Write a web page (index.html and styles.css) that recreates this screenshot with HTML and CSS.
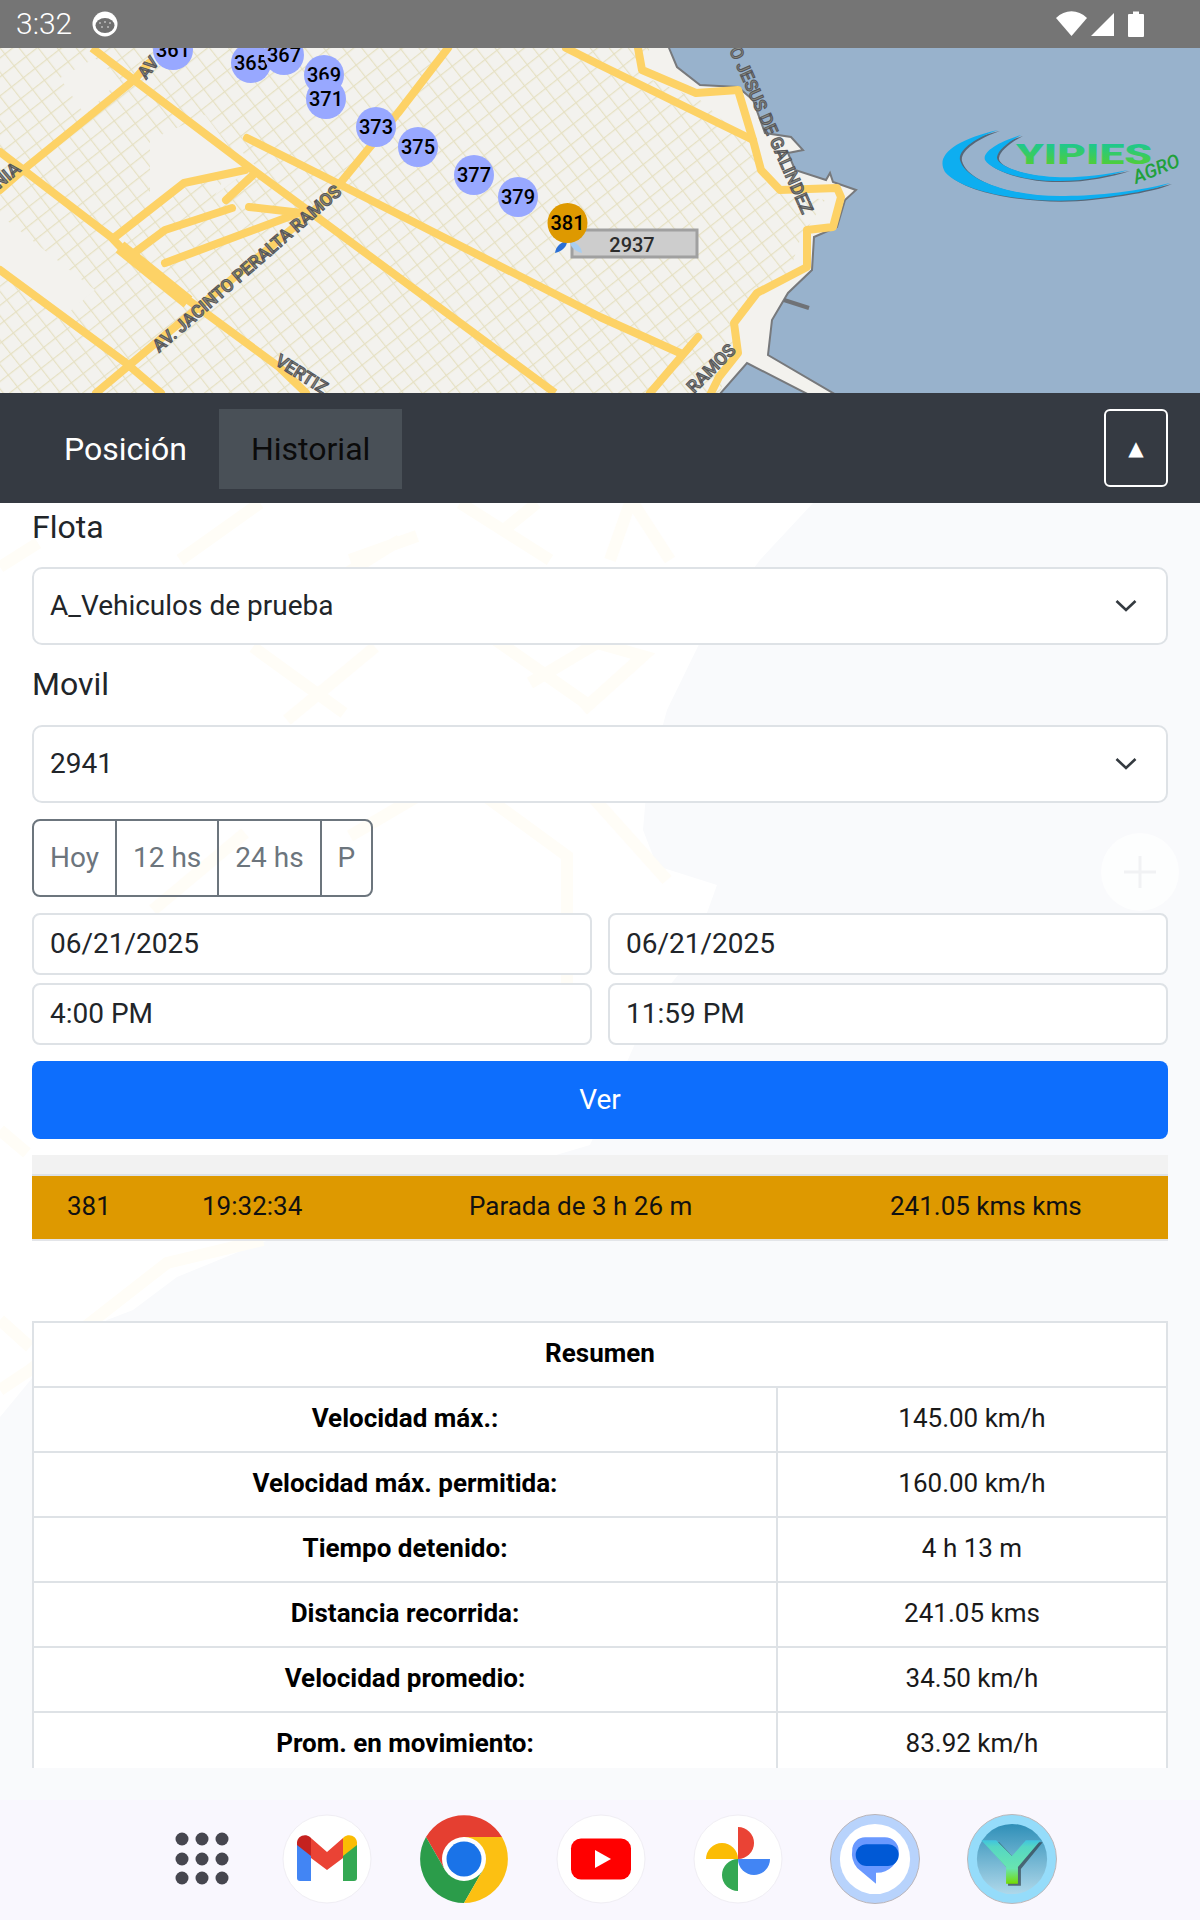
FILE: index.html
```html
<!DOCTYPE html>
<html lang="es">
<head>
<meta charset="utf-8">
<title>Yipies Agro</title>
<link rel="stylesheet" href="styles.css">
</head>
<body>
<div class="screen">
  <header class="status">
    <span class="status-time">3:32</span>
    <svg class="status-face" viewBox="0 0 26 26"><circle cx="13" cy="13" r="12.5" fill="#fff"/><ellipse cx="13" cy="14.5" rx="9.5" ry="7.5" fill="#6f6f6f"/><g fill="#bbb"><circle cx="8" cy="12" r="1"/><circle cx="13" cy="11" r="1"/><circle cx="18" cy="12" r="1"/><circle cx="10" cy="16" r="1"/><circle cx="16" cy="16" r="1"/></g></svg>
    <span class="status-gap"></span>
    <svg class="status-icons" viewBox="0 0 90 28"><path d="M0 8 C9 -1 22 -1 31 8 L15.500 26 Z" fill="#fff"/><path d="M35 26 L58 3 V26 Z" fill="#fff"/><path d="M73 4 H77 V1.500 H83 V4 H87 A1 1 0 0 1 88 5 V26 A1 1 0 0 1 87 27 H73 A1 1 0 0 1 72 26 V5 A1 1 0 0 1 73 4 Z" fill="#fff"/></svg>
  </header>

  <section class="map">
    <svg class="map-svg" viewBox="0 48 1200 345" preserveAspectRatio="none">
      <defs>
        <pattern id="streets" width="15" height="15" patternUnits="userSpaceOnUse" patternTransform="rotate(-38)">
          <path d="M0 0 H15 M0 0 V15" stroke="#e6e1c4" stroke-width="2.400" fill="none"/>
        </pattern>
        <linearGradient id="logoText" x1="0" y1="0" x2="0" y2="1">
          <stop offset="0" stop-color="#0fc6a8"/><stop offset="1" stop-color="#5fd01e"/>
        </linearGradient>
        <filter id="soft"><feGaussianBlur stdDeviation="0.700"/></filter>
      </defs>
      <rect x="0" y="48" width="1200" height="345" fill="#98b2cc"/>
      <path d="M-10 38 H665 L669 48 L677 67 L700 85 L738 87 L753 100 L765 133 L791 137 L803 150 L788 153 L795 170 L826 180 L830 173 L833 182 L856 190 L845 200 L837 227 L814 237 L812 270 L788 293 L772 320 L768 355 L850 403 H825 L747 363 L712 403 H-10 Z" fill="#f3f2ee" stroke="#77797c" stroke-width="2" filter="url(#soft)"/>
      <path d="M784 300 L809 308" stroke="#6f7276" stroke-width="4"/>
      <path d="M0 48 H650 L640 75 L700 100 L745 140 L770 190 L825 200 L800 240 L790 270 L745 310 L720 393 H0 Z" fill="url(#streets)"/>
      <g fill="#f3f2ee">
        <path d="M205 115 L245 168 L190 182 L150 205 L150 140 Z"/>
        <path d="M0 215 L95 290 L60 320 L0 265 Z"/>
        <path d="M60 78 L95 58 L120 80 L85 115 Z"/>
        <path d="M255 165 L215 195 L240 150 Z"/>
      </g>
      <g fill="none" stroke="#fdd266" stroke-width="8" stroke-linecap="round" stroke-linejoin="round">
        <path d="M92 48 L134 80 L253 170 L325 223 L555 393" stroke-linecap="butt"/>
        <path d="M149 63 L134 80 L23 170 L0 190"/>
        <path d="M448 48 L398 113 L337 187 L318 207 L96 393"/>
        <path d="M247 138 L337 183 L600 317 L680 353"/>
        <path d="M698 337 L650 393"/>
        <path d="M566 48 L600 65 L753 140"/>
        <path d="M638 48 L642 70 L696 93 L738 90 L753 140 L761 170 L780 190 L837 188 L841 197 L833 227 L807 230 L807 267 L757 293 L734 323 L738 353 L719 377 L711 393"/>
        <path d="M0 152 L111 237 L130 257 L188 300 L279 367 L306 393"/>
        <path d="M0 270 L126 363 L161 393"/>
        <path d="M115 237 L184 183 L245 170"/>
        <path d="M226 200 L253 175"/>
        <path d="M134 253 L165 230 L232 208"/>
        <path d="M165 263 L299 213"/>
        <path d="M249 207 L302 213"/>
        <path d="M120 247 L188 302" stroke-width="14" stroke-linecap="butt"/>
      </g>
      <g class="road-label">
        <text transform="translate(159 353) rotate(-41)">AV. JACINTO PERALTA RAMOS</text>
        <text transform="translate(274 364) rotate(32)">VERTIZ</text>
        <text transform="translate(-10 197) rotate(-40)">ONIA</text>
        <text transform="translate(146 80) rotate(-52)">AV</text>
        <text transform="translate(729 50) rotate(66)">O JESUS DE GALINDEZ</text>
        <text transform="translate(694 394) rotate(-45)">RAMOS</text>
      </g>
      <g>
        <path d="M572 230 H697 V257 H572 Z" fill="#cdcdcd" stroke="#a0a0a0" stroke-width="3"/>
        <path d="M555 253 C556 246 561 242 567 241 C567 247 562 251 555 253 Z" fill="#2a6fd6"/>
        <path d="M582 253 C581 246 576 242 570 241 C570 247 575 251 582 253 Z" fill="#a8cdf0"/>
        <text class="car-label" x="632" y="252" text-anchor="middle">2937</text>
      </g>
      <g class="pins">
        <g><circle cx="173" cy="50" r="20"/><text x="173" y="57">361</text></g>
        <g><circle cx="251" cy="63" r="20"/><text x="251" y="70">365</text></g>
        <g><circle cx="284" cy="55" r="20"/><text x="284" y="62">367</text></g>
        <g><circle cx="324" cy="75" r="20"/><text x="324" y="82">369</text></g>
        <g><circle cx="326" cy="99" r="20"/><text x="326" y="106">371</text></g>
        <g><circle cx="376" cy="127" r="20"/><text x="376" y="134">373</text></g>
        <g><circle cx="418" cy="147" r="20"/><text x="418" y="154">375</text></g>
        <g><circle cx="474" cy="175" r="20"/><text x="474" y="182">377</text></g>
        <g><circle cx="518" cy="197" r="20"/><text x="518" y="204">379</text></g>
        <g class="pin-last"><circle cx="567.500" cy="223" r="20"/><text x="567.500" y="230">381</text></g>
      </g>
      <g>
        <path d="M1000 131 C957 141 937 156 947 173 C967 196 1042 206 1092 200 C1127 196 1157 191 1172 184 C1132 194 1092 197 1062 197 C1012 197 967 181 962 161 C960 151 977 139 1000 131 Z" fill="#2a3540" fill-opacity="0.600"/>
        <path d="M998 130 C955 140 935 155 945 172 C965 195 1040 205 1090 199 C1125 195 1155 190 1170 183 C1130 193 1090 196 1060 196 C1010 196 965 180 960 160 C958 150 975 138 998 130 Z" fill="#0daef0"/>
        <path d="M1023 136 C1000 143 984 153 987 161 C994 173 1032 183 1062 182 C1087 182 1112 177 1130 171 C1102 177 1077 179 1057 178 C1022 176 998 166 999 158 C1000 151 1010 143 1023 136 Z" fill="#2a3540" fill-opacity="0.600"/>
        <path d="M1021 135 C998 142 982 152 985 160 C992 172 1030 182 1060 181 C1085 181 1110 176 1128 170 C1100 176 1075 178 1055 177 C1020 175 996 165 997 157 C998 150 1008 142 1021 135 Z" fill="#0daef0"/>
        <text class="logo-name" x="1016" y="164" textLength="136" lengthAdjust="spacingAndGlyphs" fill="url(#logoText)">YIPIES</text>
        <text class="logo-agro" transform="translate(1136 184) rotate(-22)">AGRO</text>
      </g>
    </svg>
  </section>

  <nav class="nav">
    <a class="nav-link">Posición</a>
    <a class="nav-link nav-active">Historial</a>
    <button class="toggler" type="button">▲</button>
  </nav>

  <main class="panel">
    <svg class="ghost" viewBox="0 503 1200 1297" preserveAspectRatio="none">
      <path d="M0 503 H813 L760 560 L703 636 L667 710 L647 783 L643 830 L657 866 L717 885 L690 960 L650 1010 L590 1145 L263 1242 L177 1277 L133 1310 L107 1320 L33 1377 L0 1417 Z" fill="#fff"/>
      <g fill="none" stroke="#fffdf7" stroke-width="12">
        <path d="M490 636 L590 706"/><path d="M530 683 L597 643 L643 656 L583 710"/>
        <path d="M467 783 L567 856 L567 1040"/><path d="M580 783 L667 880"/><path d="M350 836 L440 783"/>
        <path d="M500 533 L537 503"/><path d="M460 503 L550 560"/><path d="M610 560 L630 503"/><path d="M633 503 L670 560"/><path d="M350 560 L417 536"/>
        <path d="M0 1320 L30 1347"/><path d="M0 1390 L30 1370 L167 1263 L263 1240"/><path d="M0 1130 L27 1153"/>
        <path d="M253 647 L344 713"/><path d="M287 720 L375 647"/><path d="M0 567 L38 543"/><path d="M153 910 L245 833"/>
        <path d="M180 560 L260 503"/><path d="M320 590 L400 540"/>
      </g>
    </svg>
    <svg class="ghost-plus" viewBox="0 0 78 78"><circle cx="39" cy="39" r="39" fill="#fff" fill-opacity="0.7"/><path d="M39 23 V55 M23 39 H55" stroke="#f1f2f4" stroke-width="3"/></svg>

    <div class="form">
      <label class="field-label field-first">Flota</label>
      <div class="select">A_Vehiculos de prueba<svg class="chevron" viewBox="0 0 22 14"><path d="M1.500 2 L11 11 L20.500 2" fill="none" stroke="#343a40" stroke-width="2.600"/></svg></div>
      <label class="field-label">Movil</label>
      <div class="select">2941<svg class="chevron" viewBox="0 0 22 14"><path d="M1.500 2 L11 11 L20.500 2" fill="none" stroke="#343a40" stroke-width="2.600"/></svg></div>
      <div class="btn-group">
        <span class="btn-item">Hoy</span>
        <span class="btn-item">12 hs</span>
        <span class="btn-item">24 hs</span>
        <span class="btn-item">P</span>
      </div>
      <div class="inputs">
        <div class="input">06/21/2025</div>
        <div class="input">06/21/2025</div>
        <div class="input">4:00 PM</div>
        <div class="input">11:59 PM</div>
      </div>
      <button class="primary" type="button">Ver</button>
      <div class="stripe"></div>
      <div class="event">
        <span>381</span>
        <span>19:32:34</span>
        <span>Parada de 3 h 26 m</span>
        <span>241.05 kms kms</span>
      </div>
      <div class="summary-clip">
        <table class="summary">
          <colgroup><col class="col-name"><col></colgroup>
          <tr class="summary-head"><th colspan="2">Resumen</th></tr>
          <tr><th>Velocidad máx.:</th><td>145.00 km/h</td></tr>
          <tr><th>Velocidad máx. permitida:</th><td>160.00 km/h</td></tr>
          <tr><th>Tiempo detenido:</th><td>4 h 13 m</td></tr>
          <tr><th>Distancia recorrida:</th><td>241.05 kms</td></tr>
          <tr><th>Velocidad promedio:</th><td>34.50 km/h</td></tr>
          <tr><th>Prom. en movimiento:</th><td>83.92 km/h</td></tr>
        </table>
      </div>
    </div>
  </main>

  <footer class="dock">
    <svg class="dock-apps" viewBox="0 0 60 60" fill="#46464f">
      <circle cx="10" cy="10" r="6.500"/><circle cx="30" cy="10" r="6.500"/><circle cx="50" cy="10" r="6.500"/>
      <circle cx="10" cy="30" r="6.500"/><circle cx="30" cy="30" r="6.500"/><circle cx="50" cy="30" r="6.500"/>
      <circle cx="10" cy="49" r="6.500"/><circle cx="30" cy="49" r="6.500"/><circle cx="50" cy="49" r="6.500"/>
    </svg>
    <svg class="dock-icon" viewBox="-45 -45 90 90">
      <circle r="44" fill="#fff" stroke="#f0eef4" stroke-width="1"/>
      <path d="M-30 -17 V19 A3 3 0 0 0 -27 22 H-16 V-8 Z" fill="#4285f4"/>
      <path d="M30 -17 V19 A3 3 0 0 1 27 22 H16 V-8 Z" fill="#34a853"/>
      <path d="M-30 -16 C-30 -23 -22 -26 -17 -22 L-16 -21 V-3 L-30 -14 Z" fill="#c5221f"/>
      <path d="M30 -16 C30 -23 22 -26 17 -22 L16 -21 V-3 L30 -14 Z" fill="#fbbc04"/>
      <path d="M-16 -21 L0 -7 L16 -21 V-1 L0 11 L-16 -1 Z" fill="#ea4335"/>
    </svg>
    <svg class="dock-icon" viewBox="-45 -45 90 90">
      <path d="M-38 -22 A44 44 0 0 1 38 -22 L0 -22 L-19 11 Z" fill="#e53f31"/>
      <path d="M-38 -22 L-19 11 L19 11 L0 44 A44 44 0 0 1 -38 -22 Z" fill="#2b9c4a"/>
      <path d="M38 -22 A44 44 0 0 1 0 44 L19 11 L0 -22 Z" fill="#fcc012"/>
      <circle r="22" fill="#fff"/><circle r="17.500" fill="#1a73e8"/>
    </svg>
    <svg class="dock-icon" viewBox="-45 -45 90 90">
      <circle r="44" fill="#fff" stroke="#f0eef4" stroke-width="1"/>
      <rect x="-30" y="-20.500" width="60" height="41" rx="10" fill="#f00"/>
      <path d="M-6 -9 L10 0 L-6 9 Z" fill="#fff"/>
    </svg>
    <svg class="dock-icon" viewBox="-45 -45 90 90">
      <circle r="44" fill="#fff" stroke="#f0eef4" stroke-width="1"/>
      <path d="M0 0 V-32 A16 16 0 0 1 0 0 Z" fill="#ea4335"/>
      <path d="M0 0 H-32 A16 16 0 0 1 0 0 Z" fill="#fbbc04"/>
      <path d="M0 0 V32 A16 16 0 0 1 0 0 Z" fill="#34a853"/>
      <path d="M0 0 H32 A16 16 0 0 1 0 0 Z" fill="#4285f4"/>
    </svg>
    <svg class="dock-icon" viewBox="-45.500 -45.500 91 91">
      <circle r="45" fill="#b8d3fc" stroke="#b9b4b8" stroke-width="1"/>
      <circle r="35.500" fill="#fff"/>
      <path d="M-10 -22 H10 A14 14 0 0 1 24 -8 A22 22 0 0 1 2 14 H1 V25 L-18 9 A22 22 0 0 1 -23 -9 A13 13 0 0 1 -10 -22 Z" fill="#6a99ff"/>
      <rect x="-19.500" y="-15" width="43.500" height="22" rx="11" fill="#0059d6"/>
    </svg>
    <svg class="dock-icon" viewBox="-45.500 -45.500 91 91">
      <defs>
        <linearGradient id="yBack" x1="0" y1="0" x2="0" y2="1"><stop offset="0" stop-color="#2f8fb8"/><stop offset="1" stop-color="#afd8ea"/></linearGradient>
        <linearGradient id="yMark" x1="0" y1="0" x2="0" y2="1"><stop offset="0" stop-color="#3fc3e0"/><stop offset="0.150" stop-color="#55d6c4"/><stop offset="0.650" stop-color="#69e5b0"/><stop offset="1" stop-color="#74dc00"/></linearGradient>
      </defs>
      <circle r="45" fill="#95dcfa" stroke="#bcb6b8" stroke-width="1"/>
      <circle r="35.500" fill="url(#yBack)"/>
      <path d="M-28 -17 H-13 L2 -1 L17 -17 H31 L9 10 V27 H-4 V10 Z" fill="#33424a" fill-opacity="0.700"/>
      <path d="M-31 -19 H-16 L0 -3 L14 -19 H29 L6 8 V25 H-6 V8 Z" fill="url(#yMark)"/>
    </svg>
  </footer>
</div>
</body>
</html>
```
FILE: styles.css
```css
* { box-sizing: border-box; }

html, body { margin: 0; padding: 0; }

body {
  width: 1200px;
  height: 1920px;
  overflow: hidden;
  font-family: Roboto, "Liberation Sans", sans-serif;
  color: #212529;
}

.screen {
  display: flex;
  flex-direction: column;
  width: 1200px;
  height: 1920px;
}

/* status bar */
.status {
  display: flex;
  align-items: center;
  flex: 0 0 48px;
  padding: 0 54px 0 16px;
  background: #757575;
  color: #fff;
}
.status-time { font-size: 30px; font-weight: 300; line-height: 48px; }
.status-face { width: 26px; height: 26px; margin-left: 20px; }
.status-gap { flex: 1; }
.status-icons { width: 90px; height: 28px; }

/* map */
.map { flex: 0 0 345px; overflow: hidden; }
.map-svg { display: block; width: 1200px; height: 345px; }

.road-label text {
  font-size: 17.500px;
  font-weight: 500;
  fill: #8a8a80;
  stroke: #55565a;
  stroke-width: 1px;
}
.car-label { font-size: 20px; font-weight: 500; fill: #2c2c2c; }
.pins circle { fill: #98a8ff; }
.pins text { font-size: 20px; font-weight: 500; fill: #000; text-anchor: middle; }
.pins .pin-last circle { fill: #de9900; }
.logo-name { font-size: 28px; font-weight: 900; }
.logo-agro { font-size: 19px; font-style: italic; font-weight: 500; fill: #21a13a; }

/* navbar */
.nav {
  display: flex;
  align-items: center;
  flex: 0 0 110px;
  padding: 0 32px;
  background: #353a42;
}
.nav-link {
  display: flex;
  align-items: center;
  height: 80px;
  margin-top: 2px;
  padding: 0 32px;
  font-size: 32px;
  color: #fff;
}
.nav-active { background: #495057; color: #0b0b0b; }
.toggler {
  width: 64px;
  height: 78px;
  margin-left: auto;
  padding: 0;
  border: 2px solid #fff;
  border-radius: 6px;
  background: transparent;
  color: #fff;
  font-family: "DejaVu Sans", sans-serif;
  font-size: 20px;
}

/* panel */
.panel {
  position: relative;
  flex: 1;
  overflow: hidden;
  background: #f9fafc;
  padding: 0 32px;
}
.ghost {
  position: absolute;
  left: 0;
  top: 0;
  width: 1200px;
  height: 1297px;
}
.ghost-plus {
  position: absolute;
  left: 1101px;
  top: 330px;
  width: 78px;
  height: 78px;
}
.form { position: relative; }

.field-label {
  display: block;
  height: 48px;
  margin: 16px 0;
  font-size: 32px;
  line-height: 47px;
}
.field-first { margin: 1px 0 15px; }

.select {
  display: flex;
  align-items: center;
  justify-content: space-between;
  height: 78px;
  padding: 0 20px 2px 16px;
  border: 2px solid #dee2e6;
  border-radius: 10px;
  background: #fff;
  font-size: 28px;
}
.chevron { width: 22px; height: 14px; margin-right: 9px; margin-top: 2px; }

.btn-group {
  display: inline-flex;
  height: 78px;
  margin-top: 16px;
  border: 2px solid #6c757d;
  border-radius: 8px;
  background: transparent;
  vertical-align: top;
}
.btn-item {
  display: flex;
  align-items: center;
  padding: 0 16px 2px;
  border-left: 2px solid #6c757d;
  font-size: 28px;
  color: #6c757d;
}
.btn-item:first-child { border-left: 0; }

.inputs {
  display: grid;
  grid-template-columns: 1fr 1fr;
  gap: 8px 16px;
  margin-top: 16px;
}
.input {
  display: flex;
  align-items: center;
  height: 62px;
  padding: 0 16px 2px;
  border: 2px solid #dee2e6;
  border-radius: 8px;
  background: #fff;
  font-size: 28px;
}

.primary {
  display: block;
  width: 100%;
  height: 78px;
  margin-top: 16px;
  padding: 0 0 2px;
  border: 0;
  border-radius: 8px;
  background: #0d6efd;
  color: #fff;
  font-family: inherit;
  font-size: 28px;
}

.stripe {
  height: 21px;
  margin-top: 16px;
  background: #f2f2f2;
  border-bottom: 2px solid #dee2e6;
}
.event {
  display: grid;
  grid-template-columns: 135px 267px 421px 1fr;
  align-items: center;
  height: 65px;
  padding: 0 0 4px 35px;
  background: #de9900;
  border-bottom: 2px solid #e3e5e9;
  font-size: 26px;
  color: #111;
}

.summary-clip {
  height: 447px;
  margin-top: 80px;
  overflow: hidden;
}
.summary {
  width: 100%;
  table-layout: fixed;
  border-collapse: collapse;
  background: #fff;
  font-size: 26px;
  color: #000;
}
.col-name { width: 744px; }
.summary th,
.summary td {
  height: 65px;
  padding: 0 0 4px;
  border: 2px solid #dee2e6;
  text-align: center;
}
.summary th { font-weight: 700; }
.summary td { font-weight: 400; color: #1a1a1a; }

/* dock */
.dock {
  display: flex;
  flex: 0 0 120px;
  align-items: flex-start;
  gap: 47px;
  padding: 14px 0 0 172px;
  background: #f9f7fe;
}
.dock-apps { width: 60px; height: 60px; margin: 15px 3px 0 0; }
.dock-icon { width: 90px; height: 90px; }
```
